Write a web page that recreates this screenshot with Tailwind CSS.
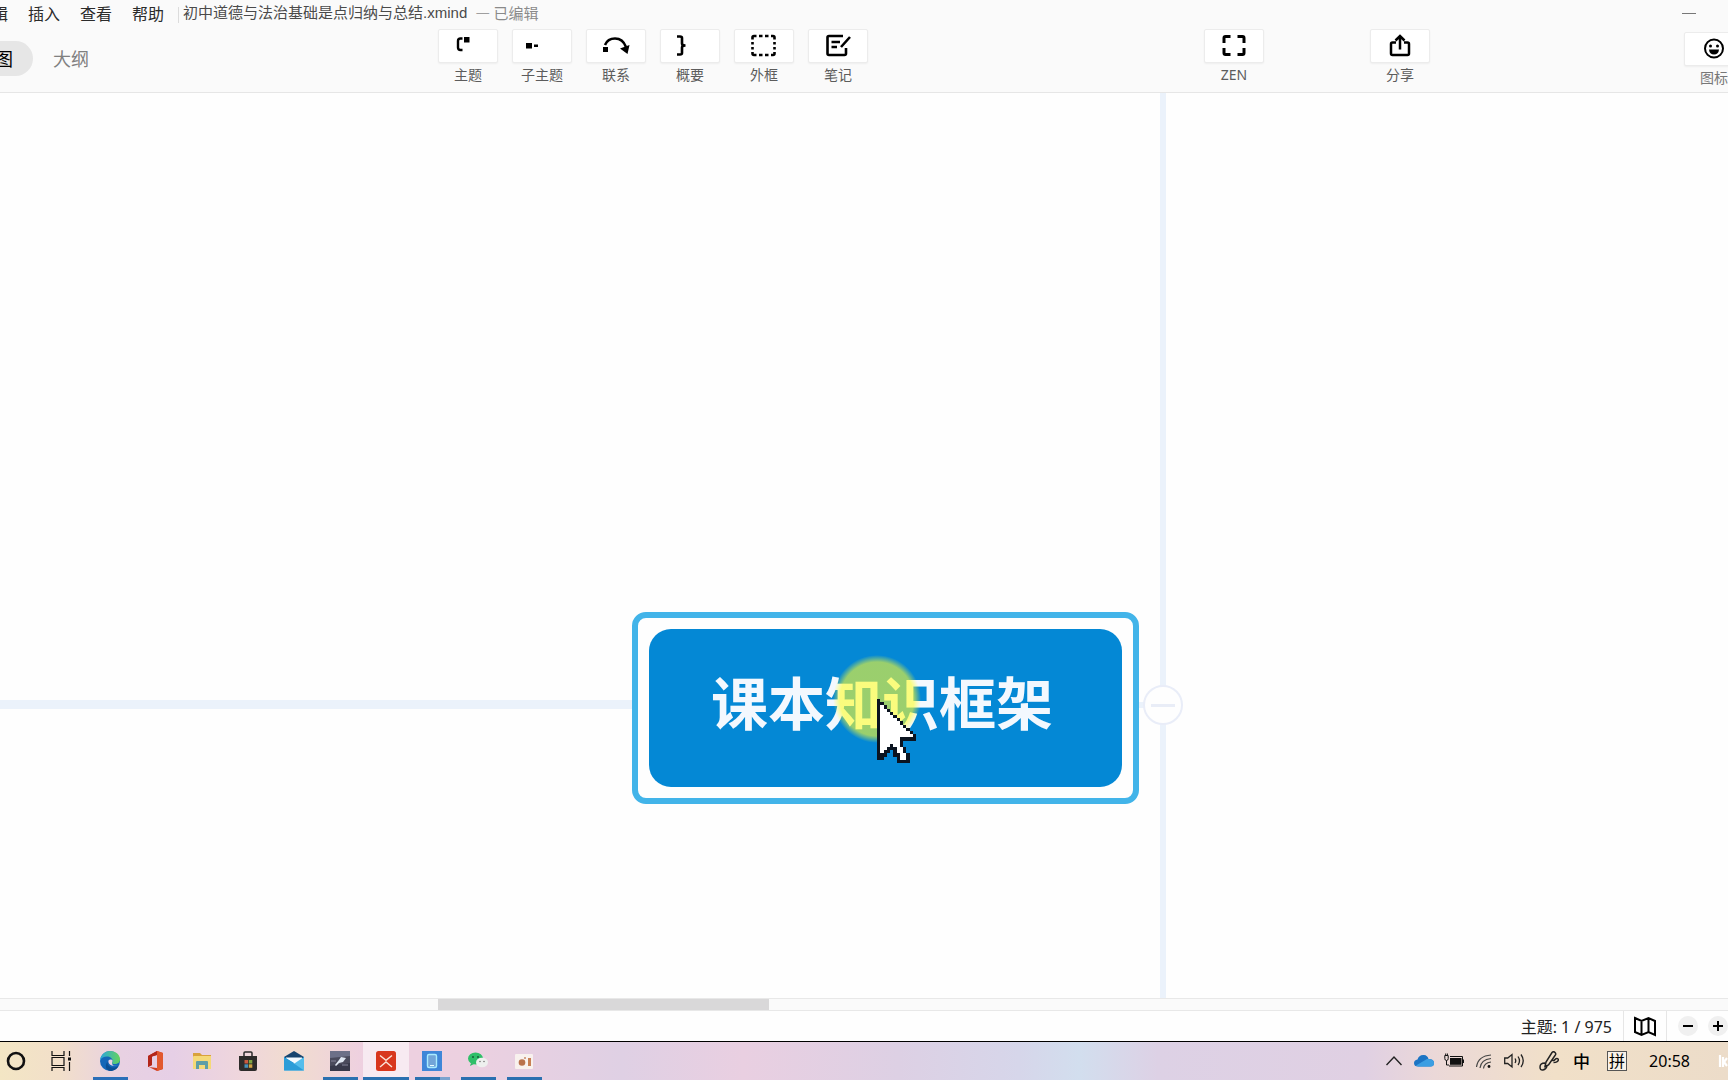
<!DOCTYPE html>
<html lang="zh-CN">
<head>
<meta charset="utf-8">
<title>初中道德与法治基础是点归纳与总结.xmind</title>
<script src="https://cdn.jsdelivr.net/npm/@tailwindcss/browser@4"></script>
</head>
<body class="h-screen overflow-hidden flex flex-col bg-[#fefefe] font-['Noto_Sans','Noto_Sans_CJK_SC',sans-serif] text-[#222]">

<header class="h-[93px] shrink-0 flex flex-col bg-[#fafafa] border-b border-[#e6e6e6] overflow-hidden">
  <!-- Title bar -->
  <div class="h-[29px] shrink-0 flex items-center whitespace-nowrap">
    <nav class="flex gap-5 -ml-2 pb-[2px] text-base leading-6 text-[#2b2b2b]">
      <a href="#">辑</a><a href="#">插入</a><a href="#">查看</a><a href="#">帮助</a>
    </nav>
    <span class="w-px h-4 ml-[14px] bg-[#dcdcdc]"></span>
    <h1 class="ml-1 pb-1 text-[15px] leading-5 text-[#4a4a4a] font-['Liberation_Sans','Noto_Sans_CJK_SC',sans-serif]">初中道德与法治基础是点归纳与总结.xmind</h1>
    <span class="ml-2 pb-1 text-[15px] leading-5 text-[#8a8a8a] font-['Noto_Sans_CJK_SC',sans-serif]">— 已编辑</span>
    <button class="ml-auto mr-8 w-[14px] h-4 flex items-center pb-[3px]" aria-label="最小化"><span class="w-full h-px bg-[#777]"></span></button>
  </div>

  <!-- Toolbar -->
  <div class="flex items-start">
    <div class="w-[438px] shrink-0 flex items-center pt-3">
      <button class="h-[35px] -ml-5 pl-[15px] pr-5 rounded-full bg-[#e6e6e6] text-lg leading-6 text-black">图</button>
      <button class="ml-5 text-lg leading-6 text-[#808080]">大纲</button>
    </div>

    <div class="flex gap-[14px]">
      <button class="w-[60px] flex flex-col items-center text-sm leading-5 text-[#5c5c5c]">
        <span class="w-full h-[34px] mb-[2px] flex items-center justify-center bg-white border border-[#ececec] rounded-xs shadow-xs">
          <svg class="w-7 h-7" viewBox="0 0 28 28" fill="none"><path d="M8.500 6.500H6.500Q4 6.500 4 9V15.500Q4 18 6.500 18H8.500" stroke="#000" stroke-width="2.400"/><path d="M10 5h5.500v5.500H10z" fill="#000"/></svg>
        </span>主题</button>
      <button class="w-[60px] flex flex-col items-center text-sm leading-5 text-[#5c5c5c]">
        <span class="w-full h-[34px] mb-[2px] flex items-center justify-center bg-white border border-[#ececec] rounded-xs shadow-xs">
          <svg class="w-7 h-7" viewBox="0 0 28 28" overflow="visible"><path d="M-2 11h6v5.500h-6zM6 12.500h4V15H6z"/></svg>
        </span>子主题</button>
      <button class="w-[60px] flex flex-col items-center text-sm leading-5 text-[#5c5c5c]">
        <span class="w-full h-[34px] mb-[2px] flex items-center justify-center bg-white border border-[#ececec] rounded-xs shadow-xs">
          <svg class="w-7 h-7" viewBox="0 0 28 28"><path d="M3 13C5 8 9 6.500 13 6.500c5 0 9 3 11 8.500" fill="none" stroke="#000" stroke-width="2.500"/><path d="M1 15h5v5H1zM18 16.500l9.500-3.500-2 9z"/></svg>
        </span>联系</button>
      <button class="w-[60px] flex flex-col items-center text-sm leading-5 text-[#5c5c5c]">
        <span class="w-full h-[34px] mb-[2px] flex items-center justify-center bg-white border border-[#ececec] rounded-xs shadow-xs">
          <svg class="w-7 h-7" viewBox="0 0 28 28" fill="none" stroke="#000" stroke-width="2.600"><path d="M1 4.500h3q2 0 2 1.500v5.500q0 2 3.500 2q-3.500 0-3.500 2V21q0 1.500-2 1.500H1"/></svg>
        </span>概要</button>
      <button class="w-[60px] flex flex-col items-center text-sm leading-5 text-[#5c5c5c]">
        <span class="w-full h-[34px] mb-[2px] flex items-center justify-center bg-white border border-[#ececec] rounded-xs shadow-xs">
          <svg class="w-7 h-7" viewBox="0 0 28 28" fill="none" stroke="#000" stroke-width="2.600"><path d="M2.500 7.500V5.500q0-1.500 1.500-1.500H6.500M9 4h3.500M15 4H18.500M21 4h2Q24.500 4 24.500 5.500v2M24.500 10v2.500M24.500 15V17.500M24.500 20v1.500q0 1.500-1.500 1.500H21M18.500 23h-3.500M12.500 23H9M6.500 23H4Q2.500 23 2.500 21.500v-1.500M2.500 17.500v-2.500M2.500 12.500v-2.500"/></svg>
        </span>外框</button>
      <button class="w-[60px] flex flex-col items-center text-sm leading-5 text-[#5c5c5c]">
        <span class="w-full h-[34px] mb-[2px] flex items-center justify-center bg-white border border-[#ececec] rounded-xs shadow-xs">
          <svg class="w-7 h-7" viewBox="0 0 28 28" fill="none" stroke="#000" stroke-width="2.600"><path d="M19 4H5Q3.500 4 3.500 5.500v16q0 1.500 1.500 1.500h15.500q1.500 0 1.500-1.500V16M7.500 10h8.500M7.500 15h5.500M26 5l-9 10"/></svg>
        </span>笔记</button>
    </div>

    <button class="ml-auto w-[60px] flex flex-col items-center text-sm leading-5 text-[#5c5c5c]">
      <span class="w-full h-[34px] mb-[2px] flex items-center justify-center bg-white border border-[#ececec] rounded-xs shadow-xs">
        <svg class="w-7 h-7" viewBox="0 0 28 28" fill="none" stroke="#000" stroke-width="3"><path d="M10.500 4.500H5.500Q4 4.500 4 6V11M17.500 4.500h5Q24 4.500 24 6V11M10.500 22.500H5.500Q4 22.500 4 21V16M17.500 22.500h5q1.500 0 1.500-1.500V16"/></svg>
      </span>ZEN</button>
    <button class="ml-[106px] w-[60px] flex flex-col items-center text-sm leading-5 text-[#5c5c5c]">
      <span class="w-full h-[34px] mb-[2px] flex items-center justify-center bg-white border border-[#ececec] rounded-xs shadow-xs">
        <svg class="w-7 h-7" viewBox="0 0 28 28" fill="none" stroke="#000" stroke-width="2.500"><path d="M10 10.500H6.500Q5 10.500 5 12v9.500q0 1.500 1.500 1.500h15q1.500 0 1.500-1.500V12q0-1.500-1.500-1.500H18M14 17.500V4.500M9.500 8.500L14 4l4.500 4.500"/></svg>
      </span>分享</button>
    <button class="ml-[254px] -mr-4 mt-[3px] w-[60px] flex flex-col items-center text-sm leading-5 text-[#777]">
      <span class="w-full h-[34px] mb-[2px] flex items-center justify-center bg-white border border-[#ececec] rounded-xs shadow-xs">
        <svg class="w-7 h-7" viewBox="0 0 28 28"><circle cx="14" cy="13.500" r="9" fill="none" stroke="#000" stroke-width="2"/><circle cx="10.500" cy="11" r="1.500"/><circle cx="17.500" cy="11" r="1.500"/><path d="M9 14.500h10q-.5 5-5 5t-5-5z"/></svg>
      </span>图标</button>
  </div>
</header>

<!-- Mind map canvas -->
<main class="relative flex-1 min-h-0 overflow-hidden bg-[#fefefe]">
  <div class="absolute left-0 top-[607px] w-[650px] h-[9px] bg-[#ebf2fb]"></div>
  <div class="absolute left-[1122px] top-[609px] w-6 h-[6px] bg-[#ebf2fb]"></div>
  <div class="absolute left-[1160px] top-0 bottom-0 w-[6px] bg-[#ebf2fb]"></div>
  <button class="absolute left-[1143px] top-[592px] w-10 h-10 rounded-full border-2 border-[#e9edf8] bg-[#fefefe] flex items-center justify-center" aria-label="收起"><span class="w-6 h-[3px] bg-[#e9edf7]"></span></button>
  <div class="absolute left-[632px] top-[519px] w-[507px] h-[192px] rounded-[14px] border-6 border-[#42b4e9] bg-[#fefefe] p-[11px]">
    <div class="relative w-full h-full rounded-[22px] bg-[#0488d5] flex items-center pl-[62px] pb-4 text-[57px] leading-[80px] font-bold text-[#f3f8fe] whitespace-nowrap font-['Noto_Sans_CJK_SC',sans-serif]">课本知识框架</div>
  </div>
  <div class="absolute left-[833px] top-[562px] w-[88px] h-[88px] rounded-full bg-[radial-gradient(closest-side,#ffff2899_0%,#ffff2899_84%,#ffff2800_100%)]"></div>
  <svg class="absolute left-[877px] top-[606px] w-[39px] h-[64px]" viewBox="0 0 12 20" preserveAspectRatio="none" shape-rendering="crispEdges">
    <path fill="#0b1420" d="M0 0h1v1h1v1h1v1h1v1h1v1h1v1h1v1h1v1h1v1h1v1h1v1h1v2H8v2h1v2h1v3H9v1H7v-1H6v-2H5v-2H4v1H3v1H2v1H0z"/>
    <path fill="#fff" d="M1 2h1v1h1v1h1v1h1v1h1v1h1v1h1v1h1v1h1v1h1v1H7v3h1v2h1v2H7v-2H6v-2H5v-1H4v1H3v1H2v1H1z"/>
  </svg>
</main>

<!-- Horizontal scrollbar -->
<div class="h-[13px] shrink-0 border-y border-[#e8e8e8] bg-[#fafafa]"><div class="ml-[438px] w-[331px] h-full bg-[#d9d8d9]"></div></div>

<!-- Status bar -->
<div class="h-[30px] shrink-0 flex items-stretch justify-end bg-[#fefefe] overflow-hidden">
  <span class="mr-[11px] pt-1 text-base leading-6 text-[#222]">主题: 1 / 975</span>
  <button class="w-11 border-x border-[#e6e6e6] flex items-center justify-center" aria-label="导航图">
    <svg class="w-6 h-6" viewBox="0 0 24 24" fill="none" stroke="#000" stroke-width="2"><path d="M2 4l6.500 3L15.500 4l6.500 3v14l-6.500-3-7 3L2 18zM8.500 7v14M15.500 4v14"/></svg>
  </button>
  <div class="flex items-center gap-[10px] pl-[11px]">
    <button class="w-5 h-5 rounded-full bg-[#f0f0f0] flex items-center justify-center" aria-label="缩小"><svg class="w-3 h-3" viewBox="0 0 12 12"><path d="M1 6h10" stroke="#000" stroke-width="2"/></svg></button>
    <button class="w-5 h-5 rounded-full bg-[#f0f0f0] flex items-center justify-center" aria-label="放大"><svg class="w-3 h-3" viewBox="0 0 12 12"><path d="M1 6h10M6 1v10" stroke="#000" stroke-width="2"/></svg></button>
  </div>
</div>

<!-- Taskbar -->
<footer class="h-[39px] shrink-0 border-t border-black flex items-stretch justify-between overflow-hidden bg-[linear-gradient(90deg,#f3e6c4_0%,#f2dfca_3.5%,#e8d1e2_7%,#e6cfe6_10%,#efd6dc_14%,#f1dccf_17%,#eed0e0_21%,#ecd0e0_27%,#dfd0e4_36%,#e9cfe1_43%,#ddd0e4_52%,#d6d6ea_59%,#d2deee_62.5%,#ddd1e5_67%,#e0d0e3_79%,#ebd8d8_83%,#f1e0c8_90%,#ecdcc9_100%)]">
  <div class="flex">
    <button class="w-8 flex items-center justify-center" aria-label="Cortana"><svg class="w-5 h-5" viewBox="0 0 20 20"><circle cx="10" cy="10" r="8" fill="none" stroke="#111" stroke-width="2.600"/></svg></button>
    <button class="w-[57px] flex items-center justify-center" aria-label="任务视图"><svg class="w-5 h-5" viewBox="0 0 20 20" fill="none" stroke="#111" stroke-width="1.200"><path d="M1 0v4.500h12V0M1 6.500h12v8H1zM1 20v-3.500h12V20M18.500 0v5M18.500 11v9"/><path d="M17 6.500h3v3h-3z" fill="#111" stroke="none"/></svg></button>
    <button class="w-[46px] -ml-[2px] flex flex-col items-center pt-[9px] justify-between" aria-label="Edge">
      <svg class="w-5 h-5" viewBox="0 0 20 20"><defs><linearGradient id="eg" x1="0" x2="1"><stop offset="0" stop-color="#2ba6dd"/><stop offset="1" stop-color="#65d35c"/></linearGradient></defs><circle cx="10" cy="10" r="10" fill="#1467b8"/><path d="M0 9.500C.5 4 5 0 10 0c6 0 10 4 10 8.500 0 3-2.500 4.500-5 4.500-2 0-3-.6-3-1.300 0-.5.6-.8.6-2C12.600 7.500 10 5.500 7 5.500 4 5.500 1 7 0 9.500z" fill="url(#eg)"/><path d="M7.500 10.500C7 15 11 17 14.500 16.500c2-.3 3.500-1.200 4-1.500-1 2.500-4 5-8 5-4-.5-6.500-4-3-9.500z" fill="#0c4f94"/><path d="M8.500 9.500c-.8 3.500 3 6.500 9.500 5-2.500 1-6 .6-6-2.800 0-1 .7-1 .5-2.200-.5-1.300-3-1.500-4 0z" fill="#ead3e4"/></svg>
      <span class="w-[35px] h-[3px] bg-[#2a6fb8]"></span></button>
    <button class="w-[46px] flex flex-col items-center pt-[9px]" aria-label="Office">
      <svg class="w-5 h-5" viewBox="0 0 20 20"><path d="M2 5l9-5 6 2v16l-6 2-8-4 8 1V4L6 5.500V14l-4 2z" fill="#cf3b21"/><path d="M11 0l6 2v16l-6 2z" fill="#e2582f"/><path d="M2 5l9-5v4L6 5.500V14l-4 2z" fill="#b3261a"/></svg></button>
    <button class="w-[46px] flex flex-col items-center pt-[9px]" aria-label="文件资源管理器">
      <svg class="w-5 h-5" viewBox="0 0 20 20"><path d="M1 2h7l2 2h9v4H1z" fill="#d9a23c"/><path d="M1 6q0-1 1-1h17v13H1z" fill="#f5d978"/><path d="M4 18v-7q0-1 1-1h10q1 0 1 1v7h-3v-4H7v4z" fill="#5f9ea6"/></svg></button>
    <button class="w-[46px] flex flex-col items-center pt-[9px]" aria-label="Microsoft Store">
      <svg class="w-5 h-5" viewBox="0 0 20 20"><path d="M6 6V2q0-1 1-1h6q1 0 1 1v4" fill="none" stroke="#2b2b2b" stroke-width="1.500"/><path d="M1 5h18v13q0 2-2 2H3q-2 0-2-2z" fill="#2d2b2a"/><path d="M6.500 9H10v3.500H6.500z" fill="#c9593f"/><path d="M10.800 9h3.500v3.500h-3.500z" fill="#7fa544"/><path d="M6.500 13.300H10v3.500H6.500z" fill="#4590b8"/><path d="M10.800 13.300h3.500v3.500h-3.500z" fill="#d0a444"/></svg></button>
    <button class="w-[46px] flex flex-col items-center pt-[9px]" aria-label="邮件">
      <svg class="w-5 h-5" viewBox="0 0 20 20"><path d="M0 6l10-6 10 6v6H0z" fill="#17456f"/><path d="M2 6.500h16v6H2z" fill="#f4fbff"/><path d="M0 6l10 6L0 19z" fill="#2390d0"/><path d="M20 6v13.500H0L20 6z" fill="#55bdeb"/><path d="M0 6l10 6.500L20 19.500H0z" fill="#2c9dd8"/></svg></button>
    <button class="w-[46px] flex flex-col items-center pt-[9px] justify-between" aria-label="图片">
      <svg class="w-5 h-5" viewBox="0 0 20 20"><path d="M0 0h20v20H0z" fill="#4a4a5c"/><path d="M0 0h20v5L0 7z" fill="#6d7088"/><path d="M0 15l20-3v8H0z" fill="#37384a"/><path d="M5 14l4-5 2-3 5 1-3 4-4 1-3 3z" fill="#dfe6f2"/><path d="M1 10h5M12 14h6" stroke="#85849a"/></svg>
      <span class="w-[35px] h-[3px] bg-[#2a70b0]"></span></button>
    <button class="w-[46px] flex flex-col items-center pt-[9px] justify-between bg-white/55" aria-label="XMind">
      <svg class="w-5 h-5" viewBox="0 0 20 20"><rect width="20" height="20" rx="2.500" fill="#d8371d"/><path d="M4 4.500l6 4.800 6-4.800M4 16l6-5 6 5" fill="none" stroke="#fbe3d8" stroke-width="1.400"/></svg>
      <span class="w-full h-[3px] bg-[#2a70b0]"></span></button>
    <button class="w-[46px] flex flex-col items-center pt-[9px] justify-between" aria-label="手机">
      <svg class="w-5 h-5" viewBox="0 0 20 20"><path d="M0 0h20v20H0z" fill="#3f86d8"/><rect x="5.500" y="3.500" width="9" height="13" rx="1.500" fill="#72a5d8" stroke="#a9ecff" stroke-width="1.400"/><path d="M8 14.500h4" stroke="#e9fbff"/></svg>
      <span class="w-[35px] h-[3px] flex"><span class="w-[25px] bg-[#2a70b0]"></span><span class="w-[10px] bg-[#7ba3cf]"></span></span></button>
    <button class="w-[46px] flex flex-col items-center pt-[9px] justify-between" aria-label="微信">
      <svg class="w-5 h-5" viewBox="0 0 20 20"><path d="M3 12l-1 3 4-2z" fill="#2fb765"/><ellipse cx="7.500" cy="7.500" rx="7.500" ry="6" fill="#2fbf68"/><circle cx="5" cy="6" r="1" fill="#175c37"/><circle cx="10" cy="6" r="1" fill="#175c37"/><ellipse cx="14" cy="11.500" rx="6" ry="4.800" fill="#eef0ee"/><circle cx="12" cy="10.500" r=".8" fill="#777"/><circle cx="16" cy="10.500" r=".8" fill="#777"/></svg>
      <span class="w-[35px] h-[3px] bg-[#2a70b0]"></span></button>
    <button class="w-[46px] flex flex-col items-center pt-[9px] justify-between" aria-label="录屏">
      <svg class="w-5 h-5" viewBox="0 0 20 20"><rect x="1" y="3" width="18" height="15" rx="1" fill="#f8f1ee"/><circle cx="8" cy="11.500" r="3.300" fill="#b9724c"/><circle cx="11" cy="7" r="1" fill="#c98a68"/><path d="M14 7h3v8h-3z" fill="#c88055"/></svg>
      <span class="w-[35px] h-[3px] bg-[#2a70b0]"></span></button>
  </div>

  <div class="flex items-center text-black">
    <button aria-label="显示隐藏的图标"><svg class="w-4 h-5" viewBox="0 0 16 20"><path d="M.5 14L8 6l7.500 8" fill="none" stroke="#222" stroke-width="1.400"/></svg></button>
    <svg class="ml-3 w-5 h-5" viewBox="0 0 20 20"><path d="M4 15.500Q0 15.500 0 12q0-3 3.500-3.500Q5 3.500 10 4q3.500.3 4.500 4Q20 8 20 12q0 3.500-3.500 3.500z" fill="#1c74c4"/><path d="M2 14.500L13 8q7-.5 7 4 0 3.500-3.500 3.500H4z" fill="#3b9ee2"/></svg>
    <svg class="ml-[10px] w-5 h-5" viewBox="0 0 20 20"><path d="M.8 4.500v3q0 2 1.700 2t1.700-2v-3zM1.700 4.500v-2M3.400 4.500v-2M2.500 9.500V14H5M6 5.500h12.500V15H5" fill="none" stroke="#111" stroke-width="1"/><rect x="6" y="7" width="11.500" height="6.800" fill="#111"/><rect x="18.500" y="8.500" width="1.500" height="3.500" fill="#111"/></svg>
    <svg class="ml-3 w-4 h-5" viewBox="0 0 16 20" fill="none" stroke="#444" stroke-width="1.200"><path d="M.5 16Q2 5 15 4M4 17Q5 8.500 15 7.500M7.500 17.500Q8 12 15 11"/><circle cx="13" cy="15.500" r="1.400" fill="#111" stroke="none"/></svg>
    <svg class="ml-3 w-[21px] h-5" viewBox="0 0 21 20" fill="none" stroke="#222" stroke-width="1.300"><path d="M.7 7h3L8 3.500v12.500l-4.300-3.500h-3zM11 7.500q1.500 2.300 0 4.500M14 5.500q3 4.300 0 8.500M17 3.500q4.500 6.300 0 12.500"/></svg>
    <svg class="ml-[14px] w-5 h-5" viewBox="0 0 20 20" fill="none" stroke="#222" stroke-width="1.500"><path d="M6 12Q1 12 1 16q0 3.500 3 3 3-.5 4-4M6 15.500L7 11l6-9.500q1.500-1.500 3 0t0 3L9.500 14zM13 9q2 1 3-.500 2-2 3.500 0-.5 3-5 3"/></svg>
    <span class="ml-[14px] w-[18px] text-[17px] leading-6 font-medium font-['Noto_Sans_CJK_SC',sans-serif]">中</span>
    <span class="ml-4 w-5 h-5 border border-[#555] bg-white/60 flex items-center justify-center text-base leading-4">拼</span>
    <time class="ml-[22px] text-base leading-6">20:58</time>
    <svg class="ml-[28px] w-[10px] h-5" viewBox="0 0 10 20" fill="none" stroke="#fff" stroke-width="2.200"><path d="M2 4v12M5 6v10M9 7l-3 4 3 4"/></svg>
  </div>
</footer>
</body>
</html>
